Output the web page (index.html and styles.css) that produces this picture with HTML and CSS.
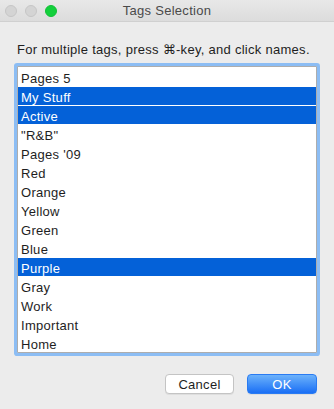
FILE: index.html
```html
<!DOCTYPE html>
<html lang="en">
<head>
    <meta charset="UTF-8">
    <title>Tags Selection</title>
    <link rel="stylesheet" href="styles.css">
</head>
<body>

<div class="window">
    <div class="titlebar">
        <div class="lights">
            <span class="light"></span>
            <span class="light"></span>
            <span class="light green"></span>
        </div>
        <div class="title">Tags Selection</div>
    </div>

    <div class="content">
        <p class="hint">For multiple tags, press ⌘-key, and click names.</p>

        <ul class="tags">
            <li>Pages 5</li>
            <li class="selected">My Stuff</li>
            <li class="selected">Active</li>
            <li>"R&amp;B"</li>
            <li>Pages '09</li>
            <li>Red</li>
            <li>Orange</li>
            <li>Yellow</li>
            <li>Green</li>
            <li>Blue</li>
            <li class="selected">Purple</li>
            <li>Gray</li>
            <li>Work</li>
            <li>Important</li>
            <li>Home</li>
        </ul>

        <div class="buttons">
            <button class="btn">Cancel</button>
            <button class="btn primary">OK</button>
        </div>
    </div>
</div>

</body>
</html>
```

FILE: styles.css
```css
body {
    margin: 0;
    font-family: "Liberation Sans", Arial, "DejaVu Sans", sans-serif;
    font-size: 13px;
    letter-spacing: 0.28px;
    color: #1e1e1e;
    background-color: #ececec;
}
.window {
    width: 334px;
    height: 409px;
    background-color: #ececec;
}
.titlebar {
    height: 22px;
    position: relative;
    background: linear-gradient(#e8e8e8, #dcdcdc);
    border-bottom: 1px solid #d0d0d0;
    box-sizing: border-box;
}
.lights {
    position: absolute;
    left: 5px;
    top: 5px;
    display: flex;
    gap: 8px;
}
.light {
    width: 12px;
    height: 12px;
    border-radius: 50%;
    box-sizing: border-box;
    background-color: #d4d4d4;
    border: 1px solid #c6c6c6;
}
.light.green {
    background-color: #13d03c;
    border-color: #12c036;
}
.title {
    text-align: center;
    line-height: 22px;
    color: #4a4a4a;
}
.content {
    padding: 20px 17px 0 17px;
}
.hint {
    margin: 0 0 8px 0;
    line-height: 16px;
}
.tags {
    list-style: none;
    margin: 0;
    padding: 0;
    background: white;
    border: 1px solid #adadad;
    box-shadow: 0 0 0 3px #8cbdf4;
    border-radius: 1px;
}
.tags li {
    height: 18px;
    box-sizing: border-box;
    padding: 3px 0 0 3px;
    line-height: 15px;
    margin-top: 1px;
}
.tags li.selected {
    background-color: #0461d8;
    color: white;
}
.buttons {
    display: flex;
    justify-content: flex-end;
    gap: 13px;
    margin-top: 21px;
}
.btn {
    font-family: inherit;
    font-size: 13px;
    letter-spacing: 0.28px;
    width: 69px;
    height: 20px;
    padding: 0;
    border-radius: 4px;
    border: 1px solid #c4c4c4;
    background: white;
    color: #1e1e1e;
    box-shadow: 0 1px 0 rgba(0, 0, 0, 0.06);
}
.btn.primary {
    width: 70px;
    border-color: #2a7bf2;
    background: linear-gradient(#6cb2fb, #1a6ff5);
    color: white;
}
```
